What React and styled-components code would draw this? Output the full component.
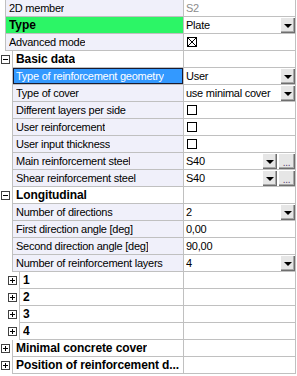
import React from "react";
import styled, { createGlobalStyle } from "styled-components";

const LINE = "#c0c0c0";
const LAVENDER = "#f0f0fa";

const rows = [
  { id: "member", indent: 5, label: "2D member", value: "S2", disabled: true },
  { id: "type", indent: 5, label: "Type", bold: true, highlight: true, value: "Plate", editor: "combo" },
  { id: "adv", indent: 5, label: "Advanced mode", editor: "check", checked: true },
  { id: "basic", indent: 12, category: true, open: true, label: "Basic data" },
  { id: "geom", indent: 12, label: "Type of reinforcement geometry", value: "User", editor: "combo", selected: true },
  { id: "cover", indent: 12, label: "Type of cover", value: "use minimal cover", editor: "combo" },
  { id: "layers", indent: 12, label: "Different layers per side", editor: "check" },
  { id: "userreinf", indent: 12, label: "User reinforcement", editor: "check" },
  { id: "thick", indent: 12, label: "User input thickness", editor: "check" },
  { id: "main", indent: 12, label: "Main reinforcement steel", value: "S40", editor: "combo-more" },
  { id: "shear", indent: 12, label: "Shear reinforcement steel", value: "S40", editor: "combo-more" },
  { id: "long", indent: 12, category: true, open: true, label: "Longitudinal" },
  { id: "ndir", indent: 12, label: "Number of directions", value: "2", editor: "combo" },
  { id: "first", indent: 12, label: "First direction angle [deg]", value: "0,00" },
  { id: "second", indent: 12, label: "Second direction angle [deg]", value: "90,00" },
  { id: "nlayers", indent: 12, label: "Number of reinforcement layers", value: "4", editor: "combo" },
  { id: "l1", indent: 19, category: true, label: "1" },
  { id: "l2", indent: 19, category: true, label: "2" },
  { id: "l3", indent: 19, category: true, label: "3" },
  { id: "l4", indent: 19, category: true, label: "4" },
  { id: "minimal", indent: 12, category: true, label: "Minimal concrete cover" },
  { id: "position", indent: 12, category: true, label: "Position of reinforcement d..." },
];

const App = () => {
  return (
    <>
      <GlobalStyle />
      <Grid>
        {rows.map((row) => (
          <Row key={row.id}>
            <Gutter $indent={row.indent}>
              {row.category && <Expander $open={row.open} />}
            </Gutter>
            <LabelCell
              $bold={row.bold || row.category}
              $bg={
                row.selected
                  ? "#3399ff"
                  : row.highlight
                  ? "#2cf566"
                  : row.category
                  ? "#ffffff"
                  : LAVENDER
              }
              $selected={row.selected}
            >
              <LabelText>{row.label}</LabelText>
            </LabelCell>
            <ValueCell>
              {row.editor === "check" ? (
                <CheckBox $checked={row.checked} />
              ) : (
                <ValueText $disabled={row.disabled}>{row.value}</ValueText>
              )}
              {(row.editor === "combo" || row.editor === "combo-more") && (
                <DropButton>
                  <Arrow />
                </DropButton>
              )}
              {row.editor === "combo-more" && <MoreButton>...</MoreButton>}
            </ValueCell>
          </Row>
        ))}
      </Grid>
    </>
  );
};

const GlobalStyle = createGlobalStyle`
  body {
    margin: 0;
    background: #ffffff;
    font-family: "Liberation Sans", Arial, sans-serif;
    font-size: 11px;
    letter-spacing: -0.25px;
    color: #000000;
  }
`;

const Grid = styled.div`
  width: 296px;
  display: flex;
  flex-direction: column;
`;

const Row = styled.div`
  display: flex;
  height: 17px;
`;

const Gutter = styled.div`
  width: ${(p) => p.$indent}px;
  flex-shrink: 0;
  display: flex;
  align-items: center;
  justify-content: flex-end;
  padding-right: 2px;
  box-sizing: border-box;
`;

const Expander = styled.span`
  position: relative;
  width: 9px;
  height: 9px;
  box-sizing: border-box;
  border: 1px solid #404040;
  background: #ffffff;

  &::before {
    content: "";
    position: absolute;
    left: 1px;
    right: 1px;
    top: 3px;
    height: 1px;
    background: #000000;
  }

  &::after {
    content: "";
    position: absolute;
    top: 1px;
    bottom: 1px;
    left: 3px;
    width: 1px;
    background: #000000;
    display: ${(p) => (p.$open ? "none" : "block")};
  }
`;

const LabelCell = styled.div`
  flex: 1;
  min-width: 0;
  display: flex;
  align-items: center;
  padding-left: 3px;
  border-left: 1px solid ${LINE};
  border-bottom: 1px solid ${LINE};
  background: ${(p) => p.$bg};
  color: ${(p) => (p.$selected ? "#ffffff" : "#000000")};
  font-weight: ${(p) => (p.$bold ? "bold" : "normal")};
  font-size: ${(p) => (p.$bold ? "12px" : "11px")};
  letter-spacing: ${(p) => (p.$bold ? "-0.1px" : "-0.25px")};
  box-shadow: ${(p) => (p.$selected ? "inset 0 0 0 1px #1a1a2e" : "none")};
`;

const LabelText = styled.span`
  white-space: nowrap;
  overflow: hidden;
  text-overflow: clip;
  line-height: 16px;
`;

const ValueCell = styled.div`
  width: 113px;
  flex-shrink: 0;
  box-sizing: border-box;
  display: flex;
  align-items: center;
  padding-left: 2px;
  border-left: 1px solid ${LINE};
  border-right: 1px solid ${LINE};
  border-bottom: 1px solid ${LINE};
`;

const ValueText = styled.span`
  flex: 1;
  white-space: nowrap;
  overflow: hidden;
  line-height: 16px;
  color: ${(p) => (p.$disabled ? "#8c8c8c" : "#000000")};
`;

const CheckBox = styled.span`
  position: relative;
  width: 10px;
  height: 10px;
  margin-left: 1px;
  box-sizing: border-box;
  border: 1px solid #000000;
  background: ${(p) =>
    p.$checked
      ? "linear-gradient(45deg, transparent 45%, #000 45%, #000 55%, transparent 55%), linear-gradient(-45deg, transparent 45%, #000 45%, #000 55%, transparent 55%)"
      : "#ffffff"};
`;

const buttonFace = `
  height: 16px;
  flex-shrink: 0;
  box-sizing: border-box;
  display: flex;
  align-items: center;
  justify-content: center;
  background: #e6e6e6;
  box-shadow: inset 1px 1px #ffffff, inset -1px -1px #6e6e6e, inset -2px -2px #a8a8a8;
`;

const DropButton = styled.span`
  ${buttonFace}
  width: 15px;
`;

const Arrow = styled.span`
  width: 0;
  height: 0;
  margin-top: 1px;
  border-left: 4px solid transparent;
  border-right: 4px solid transparent;
  border-top: 4px solid #000000;
`;

const MoreButton = styled.span`
  ${buttonFace}
  width: 17px;
  margin-left: 1px;
  align-items: flex-end;
  line-height: 12px;
  font-size: 10px;
  color: #5a3d6b;
`;

export default App;
